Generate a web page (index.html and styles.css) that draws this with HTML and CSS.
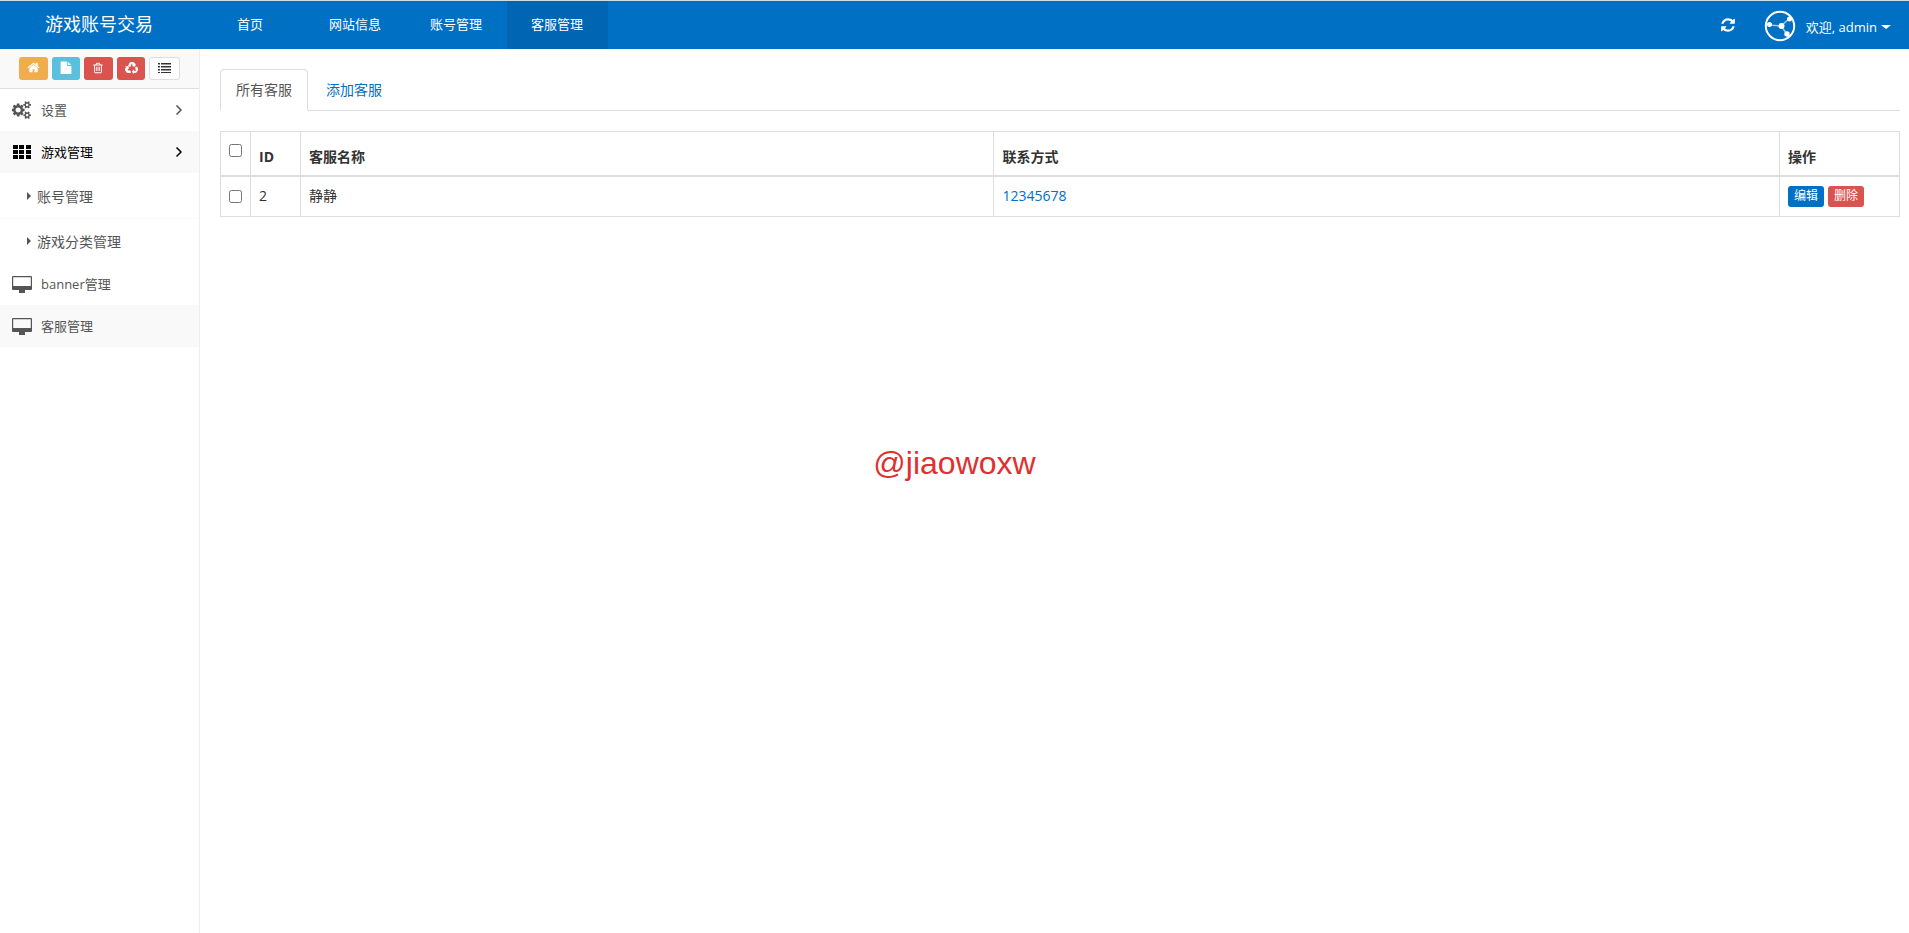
FILE: index.html
```html
<!DOCTYPE html>
<html lang="zh-CN">
<head>
<meta charset="utf-8">
<title>客服管理</title>
<link rel="stylesheet" href="styles.css">
</head>
<body>
<header class="topbar">
  <a class="brand" href="#">游戏账号交易</a>
  <nav class="topnav">
    <a class="home" href="#">首页</a>
    <a href="#">网站信息</a>
    <a href="#">账号管理</a>
    <a class="active" href="#">客服管理</a>
  </nav>
  <div class="user">
    <button class="refresh" type="button" aria-label="刷新">
      <svg width="16" height="16" viewBox="0 0 1792 1792" fill="currentColor"><path d="M1639 1056q0 5-1 7-64 268-268 434.500t-478 166.500q-146 0-282.500-55t-243.500-157l-129 129q-19 19-45 19t-45-19-19-45v-448q0-26 19-45t45-19h448q26 0 45 19t19 45-19 45l-137 137q71 66 161 102t187 36q134 0 250-65t186-179q11-17 53-117 8-23 30-23h192q13 0 22.500 9.500t9.500 22.500zm25-800v448q0 26-19 45t-45 19h-448q-26 0-45-19t-19-45 19-45l138-138q-148-137-349-137-134 0-250 65t-186 179q-11 17-53 117-8 23-30 23h-199q-13 0-22.500-9.500t-9.500-22.500v-7q65-268 270-434.500t480-166.500q146 0 284 55.500t245 156.500l130-129q19-19 45-19t45 19 19 45z"/></svg>
    </button>
    <a class="account" href="#">
      <svg class="avatar" width="32" height="32" viewBox="0 0 32 32">
        <circle cx="16" cy="16" r="14.200" fill="none" stroke="#fff" stroke-width="2"/>
        <g stroke="#9cc8ec" stroke-width="1.500"><path d="M6 15L17 16L26 8M17 16L23 24" fill="none"/></g>
        <g fill="#fff"><circle cx="5.500" cy="14.500" r="2.500"/><circle cx="17.500" cy="16" r="3"/><circle cx="25.500" cy="9" r="2.500"/><circle cx="23" cy="24" r="2.700"/></g>
      </svg>
      <span>欢迎, admin</span><i class="caret"></i>
    </a>
  </div>
</header>
<div class="layout">
  <aside class="sidebar">
    <div class="tools">
      <button class="tool warning" type="button" aria-label="首页"><svg width="13" height="13" viewBox="0 0 1792 1792" fill="currentColor"><path d="M1472 992v480q0 26-19 45t-45 19h-384v-384h-256v384h-384q-26 0-45-19t-19-45v-480q0-1 .5-3t.5-3l575-474 575 474q1 2 1 6zm223-69l-62 74q-8 9-21 11h-3q-13 0-21-7l-692-577-692 577q-12 8-24 7-13-2-21-11l-62-74q-8-10-7-23.500t11-21.500l719-599q32-26 76-26t76 26l244 204v-195q0-14 9-23t23-9h192q14 0 23 9t9 23v408l219 182q10 8 11 21.500t-7 23.500z"/></svg></button>
      <button class="tool info" type="button" aria-label="文件"><svg width="12" height="13" viewBox="128 -64 1536 1856" fill="currentColor"><path d="M1152 512v-472q22 14 36 28l408 408q14 14 28 36h-472zm-128 32q0 40 28 68t68 28h544v1056q0 40-28 68t-68 28h-1344q-40 0-68-28t-28-68v-1600q0-40 28-68t68-28h800v544z"/></svg></button>
      <button class="tool danger" type="button" aria-label="删除"><svg width="12" height="12" viewBox="0 0 1792 1792" fill="currentColor"><path d="M704 736v576q0 14-9 23t-23 9h-64q-14 0-23-9t-9-23v-576q0-14 9-23t23-9h64q14 0 23 9t9 23zm256 0v576q0 14-9 23t-23 9h-64q-14 0-23-9t-9-23v-576q0-14 9-23t23-9h64q14 0 23 9t9 23zm256 0v576q0 14-9 23t-23 9h-64q-14 0-23-9t-9-23v-576q0-14 9-23t23-9h64q14 0 23 9t9 23zm128 724v-948h-896v948q0 22 7 40.500t14.500 27 10.500 8.500h832q3 0 10.500-8.500t14.500-27 7-40.500zm-672-1076h448l-48-117q-7-9-17-11h-317q-10 2-17 11zm928 32v64q0 14-9 23t-23 9h-96v948q0 83-47 143.500t-113 60.500h-832q-66 0-113-58.500t-47-141.500v-952h-96q-14 0-23-9t-9-23v-64q0-14 9-23t23-9h309l70-167q15-37 54-63t79-26h320q40 0 79 26t54 63l70 167h309q14 0 23 9t9 23z"/></svg></button>
      <button class="tool danger" type="button" aria-label="回收"><svg width="13" height="12" viewBox="0 0 26 24" fill="currentColor"><path d="M6 8L9 2Q10 0 12 0H16Q18 0 19 2L20 4L22 3L20 9.500L13.500 8L15.500 6.500L13.500 3L10.500 10ZM20 11L24 9L26 13Q26.500 15 25.500 17L23.500 20.500Q22.500 22 20 22H18V24L13.500 19.500L18 15V17.500H22ZM11.500 17.500V22H5.500Q3.500 22 2.500 20L.5 17Q-.5 15 .5 13L2 10.500L0 9.500L6.500 7.500L8.500 14L6.500 13L5 16.500Z"/></svg></button>
      <button class="tool plain" type="button" aria-label="列表"><svg width="13" height="10" viewBox="0 0 13 10" fill="currentColor"><path d="M0 0h2v1H0zM3 0h10v1H3zM0 3h2v1H0zM3 3h10v1H3zM0 6h2v1H0zM3 6h10v1H3zM0 9h2v1H0zM3 9h10v1H3z"/><path opacity=".5" d="M0 1h2v1H0zM3 1h10v1H3zM0 4h2v1H0zM3 4h10v1H3zM0 7h2v1H0zM3 7h10v1H3z"/></svg></button>
    </div>
    <nav class="menu">
      <a class="item" href="#"><svg width="20" height="18" viewBox="0 0 1920 1792" fill="currentColor"><path d="M832 896q0-106-75-181t-181-75-181 75-75 181 75 181 181 75 181-75 75-181zm768 512q0-52-38-90t-90-38-90 38-38 90q0 53 37.500 90.500t90.500 37.500 90.500-37.500 37.500-90.500zm0-1024q0-52-38-90t-90-38-90 38-38 90q0 53 37.500 90.500t90.500 37.500 90.500-37.500 37.500-90.500zm-384 421v185q0 10-7 19.500t-16 10.500l-155 24q-11 35-32 76 34 48 90 115 7 11 7 20 0 12-7 19-23 30-82.500 89.500t-78.500 59.500q-11 0-21-7l-115-90q-37 19-77 31-11 108-23 155-7 24-30 24h-186q-11 0-20-7.500t-10-17.500l-23-153q-34-10-75-31l-118 89q-7 7-20 7-11 0-21-8-144-133-144-160 0-9 7-19 10-14 41-53t47-61q-23-44-35-82l-152-24q-10-1-17-9.500t-7-19.500v-185q0-10 7-19.500t16-10.500l155-24q11-35 32-76-34-48-90-115-7-11-7-20 0-12 7-20 22-30 82-89t79-59q11 0 21 7l115 90q34-18 77-32 11-108 23-154 7-24 30-24h186q11 0 20 7.500t10 17.500l23 153q34 10 75 31l118-89q8-7 20-7 11 0 21 8 144 133 144 160 0 8-7 19-12 16-42 54t-45 60q23 48 34 82l152 23q10 2 17 10.500t7 19.500zm640 533v140q0 16-149 31-12 27-30 52 51 113 51 138 0 4-4 7-122 71-124 71-8 0-46-47t-52-68q-20 2-30 2t-30-2q-14 21-52 68t-46 47q-2 0-124-71-4-3-4-7 0-25 51-138-18-25-30-52-149-15-149-31v-140q0-16 149-31 13-29 30-52-51-113-51-138 0-4 4-7 4-2 35-20t59-34 30-16q8 0 46 46.500t52 67.500q20-2 30-2t30 2q51-71 92-112l6-2q4 0 124 70 4 3 4 7 0 25-51 138 17 23 30 52 149 15 149 31zm0-1024v140q0 16-149 31-12 27-30 52 51 113 51 138 0 4-4 7-122 71-124 71-8 0-46-47t-52-68q-20 2-30 2t-30-2q-14 21-52 68t-46 47q-2 0-124-71-4-3-4-7 0-25 51-138-18-25-30-52-149-15-149-31v-140q0-16 149-31 13-29 30-52-51-113-51-138 0-4 4-7 4-2 35-20t59-34 30-16q8 0 46 46.500t52 67.500q20-2 30-2t30 2q51-71 92-112l6-2q4 0 124 70 4 3 4 7 0 25-51 138 17 23 30 52 149 15 149 31z"/></svg><span>设置</span><svg class="chevron" width="8" height="12" viewBox="0 0 8 12"><path d="M1.500 1.500L6 6L1.500 10.500"/></svg></a>
      <a class="item open" href="#"><svg width="20" height="14" viewBox="0 0 20 14" fill="currentColor"><path d="M1 0h5v4H1zM7 0h5v4H7zM14 0h5v4h-5zM1 5h5v4H1zM7 5h5v4H7zM14 5h5v4h-5zM1 10h5v4H1zM7 10h5v4H7zM14 10h5v4h-5z"/></svg><span>游戏管理</span><svg class="chevron" width="8" height="12" viewBox="0 0 8 12"><path d="M1.500 1.500L6 6L1.500 10.500"/></svg></a>
      <a class="sub" href="#"><i class="arrow"></i>账号管理</a>
      <a class="sub" href="#"><i class="arrow"></i>游戏分类管理</a>
      <a class="item" href="#"><svg width="20" height="17" viewBox="0 0 20 17"><path fill="currentColor" fill-rule="evenodd" d="M1 0h18q1 0 1 1v12q0 1-1 1H13v1.500h0V17H7V15.500H7V14H1q-1 0-1-1V1q0-1 1-1zM1.200 1.200V10h17.600V1.200z"/></svg><span>banner管理</span></a>
      <a class="item current" href="#"><svg width="20" height="17" viewBox="0 0 20 17"><path fill="currentColor" fill-rule="evenodd" d="M1 0h18q1 0 1 1v12q0 1-1 1H13v1.500h0V17H7V15.500H7V14H1q-1 0-1-1V1q0-1 1-1zM1.200 1.200V10h17.600V1.200z"/></svg><span>客服管理</span></a>
    </nav>
  </aside>
  <main class="content">
    <nav class="tabs">
      <a class="tab selected" href="#">所有客服</a>
      <a class="tab" href="#">添加客服</a>
    </nav>
    <table class="grid">
      <colgroup><col class="c-check"><col class="c-id"><col class="c-name"><col class="c-contact"><col class="c-ops"></colgroup>
      <thead>
        <tr><th class="check"><input type="checkbox" aria-label="全选"></th><th>ID</th><th>客服名称</th><th>联系方式</th><th>操作</th></tr>
      </thead>
      <tbody>
        <tr><td class="check"><input type="checkbox" aria-label="选择 2"></td><td>2</td><td>静静</td><td><a href="#">12345678</a></td><td><div class="ops"><button class="op edit" type="button">编辑</button><button class="op remove" type="button">删除</button></div></td></tr>
      </tbody>
    </table>
  </main>
</div>
<div class="watermark">@jiaowoxw</div>
</body>
</html>
```

FILE: styles.css
```css
* { box-sizing: border-box; }

body {
  margin: 0;
  min-height: 100vh;
  display: flex;
  flex-direction: column;
  font: 14px/20px "Open Sans", "Noto Sans CJK SC", sans-serif;
  color: #333;
  background: #fff;
}

a { color: #0070c5; text-decoration: none; }
button { font: inherit; cursor: pointer; }
svg { display: block; flex: none; }

.topbar {
  display: flex;
  height: 49px;
  border-top: 1px solid #d0dde4;
  background: #0070c5;
  font-size: 13px;
}
.topbar a { color: #fff; }
.brand {
  width: 200px;
  padding-left: 45px;
  font-size: 18px;
  line-height: 47px;
}
.topnav { display: flex; flex: 1; line-height: 47px; }
.topnav a { padding: 0 24px; width: 101px; white-space: nowrap; }
.topnav .home { padding: 0 37px; width: 105px; }
.topnav .active { background: #0066b4; }

.user { display: flex; align-items: center; padding-right: 18px; gap: 28px; }
.refresh { padding: 0; border: 0; background: none; color: #fff; }
.account { display: flex; align-items: center; padding-top: 2px; }
.account span { margin-left: 10px; padding-top: 1px; }
.caret {
  margin: 2px 0 0 4px;
  border: 4px solid transparent;
  border-width: 4px 5px 0;
  border-top-color: #fff;
}

.layout { display: flex; flex: 1; }
.sidebar { width: 200px; flex: none; border-right: 1px solid #eee; }
.tools {
  display: flex;
  align-items: flex-start;
  gap: 4px;
  height: 40px;
  padding: 8px 19px;
  background: #f9f9f9;
  border-bottom: 1px solid #ddd;
}
.tool {
  display: flex;
  align-items: center;
  justify-content: center;
  flex: 1;
  height: 23px;
  padding: 0 0 2px;
  border: 0;
  border-radius: 3px;
  color: #fff;
}
.warning { background: #f0ad4e; }
.info { background: #5bc0de; }
.danger { background: #d9534f; }
.plain { background: #fff; border: 1px solid #ddd; color: #333; }

.item {
  display: flex;
  align-items: center;
  gap: 9px;
  height: 42px;
  padding: 0 16px 0 12px;
  font-size: 13px;
  color: #555;
}
.item span { flex: 1; }
.open { background: #f9f9f9; color: #000; }
.current { background: #f9f9f9; }
.chevron { fill: none; stroke: currentColor; stroke-width: 1.5; }
.sub {
  display: flex;
  align-items: center;
  height: 45px;
  padding: 2px 0 0 27px;
  color: #555;
}
.sub + .sub { border-top: 1px solid #f9f9f9; }
.arrow {
  margin: 0 6px 2px 0;
  border: 4px solid transparent;
  border-left-color: #555;
  border-right: 0;
}

.content { flex: 1; padding: 20px 9px 0 20px; }
.tabs { display: flex; border-bottom: 1px solid #ddd; }
.tab {
  padding: 10px 15px;
  margin-bottom: -1px;
  border: 1px solid transparent;
  border-radius: 4px 4px 0 0;
}
.tab + .tab { margin-left: 2px; }
.selected { color: #555; background: #fff; border-color: #ddd #ddd #fff; }

.grid {
  width: 100%;
  margin-top: 20px;
  table-layout: fixed;
  border-collapse: collapse;
}
.c-check { width: 30px; }
.c-id { width: 50px; }
.c-name { width: 41.300%; }
.c-ops { width: 120px; }
.grid th, .grid td { border: 1px solid #ddd; padding: 8px; text-align: left; vertical-align: middle; }
.grid th { height: 44px; padding: 14px 8px 8px; vertical-align: bottom; border-bottom-width: 2px; }
.grid .check { padding: 0 8px; vertical-align: middle; }
.grid th.check { padding-bottom: 6px; }
.check input { display: block; width: 13px; height: 13px; margin: 0; }
.ops { display: flex; gap: 4px; padding: 1px 0; }
.op {
  height: 21px;
  padding: 0 6px;
  border: 0;
  border-radius: 3px;
  color: #fff;
  font-size: 12px;
  line-height: 20px;
}
.edit { background: #0070c5; }
.remove { background: #d9534f; }

.watermark {
  position: absolute;
  left: 50%;
  top: 50%;
  padding-bottom: 8px;
  transform: translate(-50%, -50%);
  font: 32px/36px "Liberation Sans", sans-serif;
  color: #e03030;
}
```
